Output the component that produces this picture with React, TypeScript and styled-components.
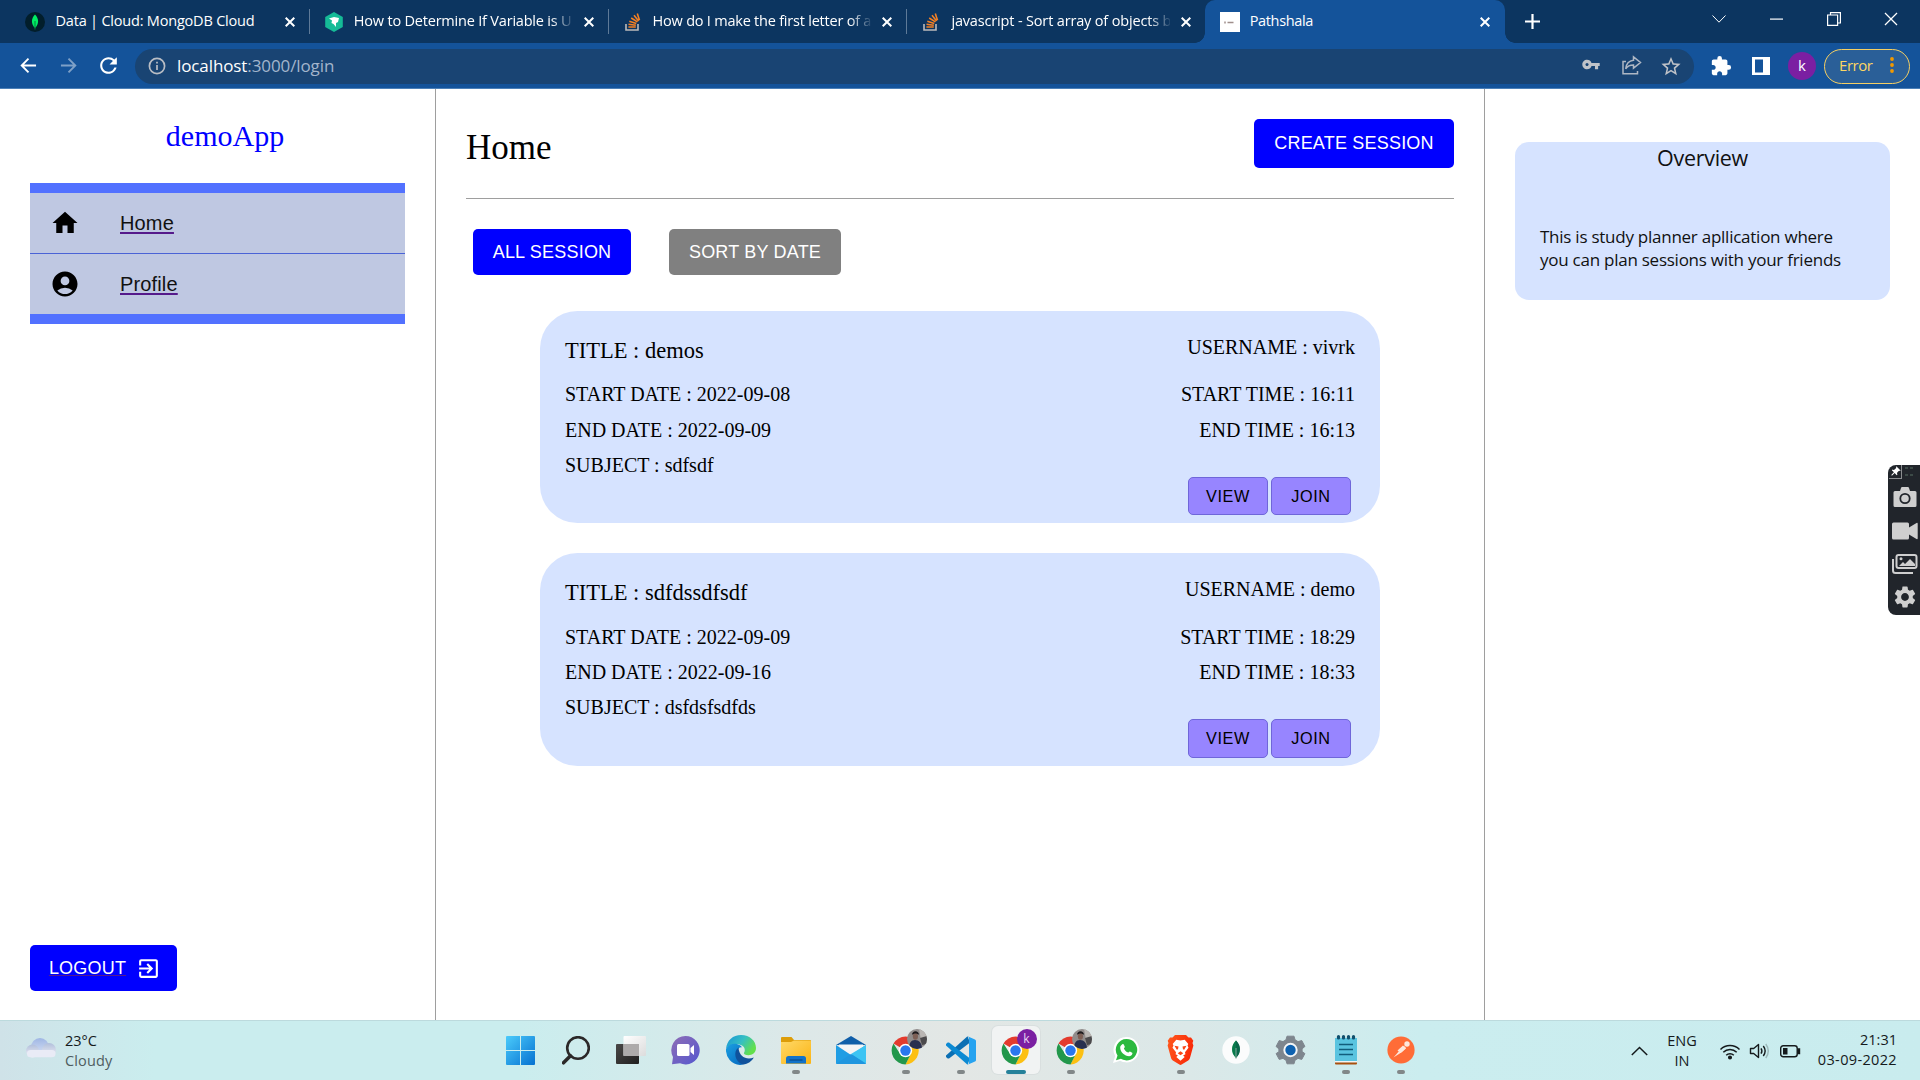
import React from "react";
import styled, { createGlobalStyle, css } from "styled-components";
import { MdHome, MdAccountCircle, MdExitToApp, MdVpnKey, MdStarBorder, MdExtension, MdRefresh, MdSettings, MdPushPin } from "react-icons/md";

const ui = `"Open Sans", "Noto Sans", sans-serif`;
const sans = `"Liberation Sans", Arial, sans-serif`;
const serif = `"Liberation Serif", "Times New Roman", serif`;

const Global = createGlobalStyle`
  *, *::before, *::after { box-sizing: border-box; }
  body { margin: 0; background: #fff; overflow: hidden; }
  button { border: 0; padding: 0; margin: 0; }
  svg { display: block; flex: none; }
`;

const Screen = styled.div`
  position: relative;
  width: 1920px;
  height: 1080px;
  display: grid;
  grid-template-rows: 43px 46px 931px 60px;
  overflow: hidden;
`;

/* ---------- browser tabs ---------- */
const TabStrip = styled.div`
  display: flex;
  align-items: stretch;
  background: #0c3560;
  padding-left: 10px;
  color: #fff;
  font-family: ${ui};
`;
const Tab = styled.div<{ $active?: boolean; $divider?: boolean }>`
  position: relative;
  display: flex;
  align-items: center;
  width: ${(p) => (p.$active ? 300 : 298.8)}px;
  padding: 0 11px 0 15px;
  ${(p) =>
    p.$divider &&
    css`
      &::after {
        content: "";
        position: absolute;
        right: -1px;
        top: 9px;
        width: 1px;
        height: 25px;
        background: #5e7a98;
      }
    `}
  ${(p) =>
    p.$active &&
    css`
      padding-right: 12px;
      background: #14539a;
      border-radius: 10px 10px 0 0;
      &::before,
      &::after {
        content: "";
        position: absolute;
        bottom: 0;
        width: 10px;
        height: 10px;
      }
      &::before {
        left: -10px;
        background: radial-gradient(circle at 0 0, #0c3560 9.5px, #14539a 10px);
      }
      &::after {
        right: -10px;
        background: radial-gradient(circle at 100% 0, #0c3560 9.5px, #14539a 10px);
      }
    `}
`;
const Favicon = styled.span<{ $gap: number }>`
  width: 20px;
  height: 20px;
  margin-right: ${(p) => p.$gap}px;
  display: flex;
  align-items: center;
  justify-content: center;
`;
const TabTitle = styled.span<{ $fade?: boolean; $track: number }>`
  flex: 1;
  min-width: 0;
  white-space: nowrap;
  font-size: 14.5px;
  line-height: 22px;
  padding-bottom: 2px;
  letter-spacing: ${(p) => p.$track}px;
  ${(p) => p.$fade && "mask-image: linear-gradient(90deg, #000 90%, transparent 101%);"}
`;
const CloseTab = styled.span`
  width: 16px;
  margin-left: 8px;
  display: flex;
  justify-content: center;
`;
const NewTab = styled.span`
  width: 54px;
  display: flex;
  align-items: center;
  justify-content: center;
`;
const WindowButtons = styled.div`
  margin-left: auto;
  display: flex;
  height: 37px;
`;
const WindowButton = styled.span`
  width: 57.4px;
  display: flex;
  align-items: center;
  justify-content: center;
`;

/* ---------- browser toolbar ---------- */
const Toolbar = styled.div`
  display: flex;
  align-items: center;
  background: #14539a;
  border-bottom: 1px solid #4c80b8;
  padding: 0 10px 0 8px;
  font-family: ${ui};
`;
const NavButton = styled.span<{ $dim?: boolean }>`
  width: 40px;
  display: flex;
  justify-content: center;
  opacity: ${(p) => (p.$dim ? 0.45 : 1)};
  color: #fff;
`;
const AddressBar = styled.div`
  flex: none;
  display: flex;
  align-items: center;
  width: 1559px;
  height: 35px;
  margin: 1px 0 0 7px;
  padding: 0 10px 0 13px;
  border-radius: 18px;
  background: #194473;
  color: #c0c3c8;
`;
const Url = styled.span`
  margin-left: 11px;
  margin-top: -1px;
  flex: 1;
  font-size: 17px;
  letter-spacing: -0.1px;
  color: #a3b5cc;
  b {
    font-weight: 400;
    color: #fff;
  }
`;
const AddressIcons = styled.span`
  display: flex;
  gap: 14px;
  svg {
    width: 26px;
  }
`;
const ToolIcon = styled.span<{ $w: number }>`
  width: ${(p) => p.$w}px;
  display: flex;
  justify-content: center;
  color: #fff;
`;
const ProfileDot = styled.span`
  width: 28px;
  height: 28px;
  margin: 1px 8px 0 7px;
  border-radius: 50%;
  background: #7b1fa2;
  color: #fff;
  font-size: 15px;
  line-height: 27px;
  text-align: center;
`;
const ErrorChip = styled.span`
  display: flex;
  align-items: center;
  width: 86px;
  height: 35px;
  margin-top: 1px;
  padding: 0 15px 2px 14px;
  justify-content: space-between;
  border: 1.5px solid #f5cf63;
  border-radius: 18px;
  background: #2a5f98;
  color: #fdd663;
  font-size: 15px;
  letter-spacing: -0.45px;
  line-height: 28px;
`;

/* ---------- page ---------- */
const Page = styled.main`
  display: grid;
  grid-template-columns: 436px 1049px 435px;
  background: #fff;
`;
const Sidebar = styled.aside`
  display: flex;
  flex-direction: column;
  align-items: flex-start;
  padding: 30px 30px 29px;
  border-right: 1px solid #9e9e9e;
`;
const Brand = styled.h1`
  margin: 0 0 30px;
  padding-left: 15px;
  width: 375px;
  text-align: center;
  font: 400 30px/34px ${serif};
  color: #0000ff;
`;
const Menu = styled.nav`
  width: 375px;
  border: solid #5271ff;
  border-width: 10px 0;
  background: #bfc8e2;
`;
const MenuItem = styled.div`
  display: flex;
  align-items: center;
  gap: 40px;
  height: 60px;
  padding-left: 20px;
  & + & {
    height: 61px;
    border-top: 1px solid #4a63d6;
  }
`;
const MenuLink = styled.a`
  font: 20px/24px ${sans};
  letter-spacing: 0.15px;
  color: #111;
  text-decoration: underline #551a8b;
  text-decoration-thickness: 2px;
  text-underline-offset: 2px;
`;
const Button = styled.button<{ $tone?: string; $h?: number; $w: number }>`
  display: flex;
  align-items: center;
  justify-content: center;
  width: ${(p) => p.$w}px;
  height: ${(p) => p.$h ?? 46}px;
  border-radius: 5px;
  background: ${(p) => p.$tone ?? "#0000ff"};
  color: #fff;
  font: 18px/22px ${sans};
  letter-spacing: 0.2px;
`;
const CreateButton = styled(Button)`
  padding-bottom: 2px;
`;
const Logout = styled(Button)`
  margin-top: auto;
  gap: 10px;
  padding-left: 3px;
  span {
    text-decoration: underline #551a8b 1px;
    text-underline-offset: 1px;
  }
`;
const Center = styled.section`
  padding: 30px 30px 0;
  border-right: 1px solid #9e9e9e;
`;
const Header = styled.header`
  display: flex;
  justify-content: space-between;
  align-items: flex-start;
  height: 80px;
  border-bottom: 1px solid #9e9e9e;
`;
const Heading = styled.h2`
  margin: 9px 0 0;
  font: 400 35px/40px ${serif};
  color: #000;
`;
const Filters = styled.div`
  display: flex;
  gap: 38px;
  margin: 30px 0 35.9px 7px;
`;
const Cards = styled.div`
  display: flex;
  flex-direction: column;
  gap: 30.2px;
  width: 840px;
  margin-left: 74px;
`;
const Card = styled.article`
  display: flex;
  justify-content: space-between;
  height: 212.3px;
  padding: 0 25px;
  border-radius: 37.5px;
  background: #d6e3ff;
  color: #000;
  font: 20px/35.3px ${serif};
`;
const Facts = styled.div`
  padding-top: 25.1px;
`;
const CardTitle = styled.div`
  font-size: 22.5px;
  line-height: 30px;
  margin-bottom: 11.3px;
`;
const Times = styled.div`
  padding-top: 21.1px;
  text-align: right;
`;
const UserName = styled.div`
  line-height: 30px;
  margin-bottom: 15.3px;
`;
const CardActions = styled.div`
  display: flex;
  justify-content: flex-end;
  gap: 3px;
  margin: 28.8px 4px 0 0;
`;
const SmallButton = styled.button`
  width: 80px;
  height: 38.4px;
  border: 1px solid #6f66d9;
  border-radius: 5px;
  background: #9785ff;
  color: #000;
  font: 16.25px/20px ${sans};
  letter-spacing: 0.58px;
`;
const Right = styled.aside`
  padding: 53px 30px 0;
`;
const Overview = styled.div`
  height: 158px;
  padding: 1px 25px 0;
  border-radius: 14px;
  background: #d6e3ff;
  color: #111;
  font-family: ${ui};
`;
const OverviewTitle = styled.div`
  text-align: center;
  font-size: 21.5px;
  line-height: 30px;
  letter-spacing: -0.3px;
  margin-bottom: 52px;
`;
const OverviewText = styled.p`
  margin: 0;
  font-size: 17px;
  line-height: 23.3px;
  letter-spacing: -0.25px;
  white-space: nowrap;
`;

/* ---------- capture widget ---------- */
const Capture = styled.div`
  position: absolute;
  right: 0;
  top: 465px;
  width: 32px;
  height: 150px;
  padding-left: 1px;
  border-radius: 8px 0 0 8px;
  background: #21252b;
  color: #cfcfcf;
  display: flex;
  flex-direction: column;
  align-items: center;
`;
const PinRow = styled.div`
  width: 100%;
  height: 14px;
  margin-bottom: 2px;
  color: #fff;
  display: flex;
  align-items: center;
  gap: 2px;
`;
const PinBox = styled.span`
  width: 13px;
  height: 14px;
  border: solid #8b8d90;
  border-width: 0 1px 1px 0;
  display: flex;
  align-items: center;
  justify-content: center;
`;
const CaptureSlot = styled.div`
  height: 33px;
  display: flex;
  align-items: center;
`;

/* ---------- taskbar ---------- */
const Taskbar = styled.footer`
  display: grid;
  grid-template-columns: 493px 935px 1fr;
  border-top: 1px solid #bcdadd;
  background: linear-gradient(90deg, #cfe2e8 0, #caedee 8%, #caedee 27%, #dde8e8 42%, #e3e7e5 50%, #dbe8e8 62%, #cbedef 74%, #c9ecee 100%);
  font-family: ${ui};
  color: #151a1c;
`;
const Weather = styled.div`
  display: flex;
  gap: 8px;
  padding: 10px 0 0 25px;
  font-size: 14.5px;
  line-height: 20px;
  letter-spacing: 0;
  em {
    display: block;
    font-style: normal;
    letter-spacing: 0.15px;
    color: #4f5c60;
  }
`;
const Apps = styled.div`
  display: flex;
`;
const AppSlot = styled.div<{ $active?: boolean }>`
  position: relative;
  width: 48px;
  height: 48px;
  margin: 5px 3.5px 0;
  display: flex;
  align-items: center;
  justify-content: center;
  border-radius: 6px;
  ${(p) => p.$active && "background: #f1f3f3; box-shadow: 0 0 0 1px #d9dfdf;"}
`;
const Running = styled.i<{ $wide?: boolean }>`
  position: absolute;
  bottom: 0;
  left: ${(p) => (p.$wide ? 14 : 20)}px;
  width: ${(p) => (p.$wide ? 20 : 8)}px;
  height: 4px;
  border-radius: 2px;
  background: ${(p) => (p.$wide ? "#25819a" : "#818788")};
`;
const Badge = styled.span`
  position: absolute;
  left: 25px;
  top: 3px;
`;
const BadgeLetter = styled.span`
  display: block;
  width: 20px;
  height: 20px;
  border-radius: 50%;
  background: #7b1fa2;
  color: #e9d5f2;
  font-size: 12px;
  line-height: 19px;
  text-align: center;
`;
const Tray = styled.div`
  display: flex;
  align-items: center;
  justify-content: flex-end;
  padding-right: 23px;
  font-size: 14.5px;
  line-height: 20px;
`;
const Lang = styled.div`
  width: 34px;
  margin: 0 20px 0 17px;
  text-align: center;
`;
const Clock = styled.div`
  width: 80px;
  margin-left: 16px;
  text-align: right;
  white-space: nowrap;
  padding-bottom: 1px;
  span {
    letter-spacing: 0.35px;
  }
`;
const TrayIcons = styled.div`
  display: flex;
  gap: 8px;
`;

const X = ({ s = 10, w = 2 }: { s?: number; w?: number }) => (
  <svg width={s} height={s} viewBox="0 0 10 10" stroke="#fff" strokeWidth={w} fill="none">
    <path d="M.7.7l8.6 8.6M9.3.7L.7 9.3" />
  </svg>
);

const Arrow = ({ flip }: { flip?: boolean }) => (
  <svg width="17" height="17" viewBox="0 0 18 18" fill="none" stroke="#fff" strokeWidth="2" transform={flip ? "scale(-1 1)" : undefined}>
    <path d="M17 9H2.5M9 1.8L1.8 9 9 16.2" />
  </svg>
);

const StackIcon = () => (
  <svg width="16" height="18" viewBox="0 0 16 18" fill="none">
    <path d="M1 11v6h12v-6" stroke="#bcbbbb" strokeWidth="1.6" />
    <path d="M3.4 14h7.4M3.5 11.2l7.3 1M4.3 8.2l7 2.3M6.2 5l6.2 3.9M9 2.2l4.6 5.8M12.3.6l2.2 6.6" stroke="#f48024" strokeWidth="1.6" />
  </svg>
);

const Chrome = () => (
  <svg width="29" height="29" viewBox="0 0 48 48">
    <path d="M24 24L4.100 12.500A23 23 0 0 1 43.900 12.500Z" fill="#e33b2e" />
    <path d="M24 13.500h19.400A23 23 0 0 1 24 47L33 29Z" fill="#fcc013" />
    <path d="M4.100 12.500L14.900 29.200 24 34.500 33 29.300 24 47A23 23 0 0 1 4.100 12.500Z" fill="#22974b" />
    <circle cx="24" cy="24" r="11" fill="#fff" />
    <circle cx="24" cy="24" r="8.600" fill="#2a77ee" />
  </svg>
);

const PhotoBadge = () => (
  <Badge>
    <svg width="20" height="20" viewBox="0 0 20 20">
      <defs>
        <clipPath id="face"><circle cx="10" cy="10" r="10" /></clipPath>
      </defs>
      <g clipPath="url(#face)">
        <path d="M0 0h20v20H0z" fill="#918c8b" />
        <path d="M12 0h8v9l-6 2z" fill="#b9b6b3" />
        <path d="M13 9l7-2v8l-5 1z" fill="#4b4a4c" />
        <path d="M2 20c0-6 2-9 6-9s7 3 7 9z" fill="#28304f" />
        <ellipse cx="8.400" cy="7.200" rx="2.600" ry="3.500" fill="#7d5f55" />
        <path d="M5 6c0-5 7-5 7 0-2-2-5-2-7 0z" fill="#1d1a1d" />
      </g>
    </svg>
  </Badge>
);

const StartIcon = () => (
  <svg width="29" height="29" viewBox="0 0 29 29">
    <defs>
      <linearGradient id="win" x2="1" y2="1"><stop stopColor="#4bcbfb" /><stop offset="1" stopColor="#0571d1" /></linearGradient>
    </defs>
    <path d="M1 0h13v14H0V1q0-1 1-1zM15 0h13q1 0 1 1v13H15zM0 15h14v14H1q-1 0-1-1zM15 15h14v13q0 1-1 1H15z" fill="url(#win)" />
  </svg>
);
const SearchIcon = () => (
  <svg width="28" height="29" viewBox="0 0 28 29" fill="none" stroke="#2b2828">
    <circle cx="16" cy="12" r="10.800" strokeWidth="2.600" />
    <path d="M8.500 19.800l-7 7" strokeWidth="3.600" strokeLinecap="round" />
  </svg>
);
const TaskViewIcon = () => (
  <svg width="30" height="28" viewBox="0 0 30 28">
    <defs>
      <linearGradient id="tv" x2="1" y2="1"><stop stopColor="#4a4847" /><stop offset="1" stopColor="#201f1f" /></linearGradient>
      <linearGradient id="tw" x2="1" y2="1"><stop stopColor="#fff" /><stop offset="1" stopColor="#dcdcdc" /></linearGradient>
    </defs>
    <rect y="8" width="23" height="20" rx="1" fill="url(#tv)" />
    <rect x="7.500" y="0" width="22.500" height="20" rx="1" fill="url(#tw)" />
    <path d="M7.500 8H23v12H7.500z" fill="#adaaaa" />
  </svg>
);
const ChatIcon = () => (
  <svg width="29" height="29" viewBox="0 0 29 29">
    <defs>
      <linearGradient id="ch" x2="1" y2="1"><stop stopColor="#8f6db5" /><stop offset="1" stopColor="#5457cf" /></linearGradient>
    </defs>
    <path d="M14.500 0a14.200 14.200 0 1 1-5.500 27.300L1 28.300 2 21A14.200 14.200 0 0 1 14.500 0z" fill="url(#ch)" />
    <rect x="6" y="8" width="12.500" height="12" rx="1.500" fill="#fff" />
    <path d="M19.500 12l3.500-3v10l-3.500-3z" fill="#fff" />
  </svg>
);
const EdgeIcon = () => (
  <svg width="30" height="30" viewBox="0 0 30 30">
    <defs>
      <linearGradient id="e1" x1="0" y1="0" x2="1" y2=".5"><stop stopColor="#1793d8" /><stop offset=".55" stopColor="#35bfc3" /><stop offset="1" stopColor="#62e04c" /></linearGradient>
      <linearGradient id="e2" x1="0" y1="0" x2="1" y2="1"><stop stopColor="#1ba0e2" /><stop offset="1" stopColor="#0462bb" /></linearGradient>
    </defs>
    <path d="M0 14C1 5 7 0 15 0c9 0 15 6 15 13 0 5-4 7.200-7.500 7.200-3 0-5-1-4.500-2.500 1.500-2 1-6-2.500-7.500C10 8 3 9 0 14z" fill="url(#e1)" />
    <path d="M0 14c2-4.500 7-6.200 11.500-4.800 2 .6 4 2 4.500 3-3-.5-5 2-4.500 6 .5 5 5 8.500 10 8-2 2.500-5 3.800-7.500 3.800A15 15 0 0 1 0 14z" fill="url(#e2)" />
    <path d="M12.500 12.500C7 16 8.500 27 17 29.500c5-.5 9-3.500 10.800-7C21 25.500 13 22 12.500 12.500z" fill="#10529c" />
  </svg>
);
const FolderIcon = () => (
  <svg width="30" height="27" viewBox="0 0 30 27">
    <defs>
      <linearGradient id="fo" x2="1" y2="1"><stop stopColor="#ffd968" /><stop offset="1" stopColor="#fbb414" /></linearGradient>
    </defs>
    <path d="M0 1q0-1 1-1h9.500L13 3H29q1 0 1 1v4H0z" fill="#dd9d09" />
    <path d="M0 5h10l3-1.500H29q1 0 1 1V26q0 1-1 1H1q-1 0-1-1z" fill="url(#fo)" />
    <path d="M5 26.500v-5Q5 19 7.500 19h15Q25 19 25 21.500v5z" fill="#1373c9" />
    <path d="M8.500 23h13" stroke="#0c4f93" strokeWidth="1.400" />
  </svg>
);
const MailIcon = () => (
  <svg width="30" height="28" viewBox="0 0 30 28">
    <path d="M0 9L15 0l15 9z" fill="#0f5ea9" />
    <path d="M3 8.500h24V20H3z" fill="#f4f4f5" />
    <path d="M0 9l15 10L30 9v18q0 1-1 1H1q-1 0-1-1z" fill="#1f9de4" />
    <path d="M30 9v18.500L15 18z" fill="#3dc4f3" />
    <path d="M0 28h30L15 18z" fill="#1f96df" />
  </svg>
);
const CodeIcon = () => (
  <svg width="30" height="29" viewBox="0 0 30 29">
    <path d="M21.500.3L0 19.500q-.5.800 0 1.400l1.700 1.500q.6.400 1.300 0L24 6.500z" fill="#0b6fb3" />
    <path d="M21.500 28.700L0 9.500q-.5-.800 0-1.400l1.700-1.500q.6-.400 1.300 0L24 22.500z" fill="#0c8ad3" />
    <path d="M21.500.3L29 3.500q1 .5 1 1.500v19q0 1-1 1.500l-7.500 3.200q1.500-.500 1.500-2V2.500q0-1.500-1.500-2.200z" fill="#26a3f0" />
  </svg>
);
const WhatsIcon = () => (
  <svg width="28" height="28" viewBox="0 0 28 28">
    <path d="M14.500 1a12.700 12.700 0 1 1-6.300 23.700L1 27l2.200-7A12.700 12.700 0 0 1 14.500 1z" fill="#fff" />
    <path d="M14.500 3a10.700 10.700 0 1 1-5.600 19.800L4 24.300l1.500-4.900A10.700 10.700 0 0 1 14.500 3z" fill="#2bb93f" />
    <path d="M10.300 8.200c.5-.5 1.200-.4 1.500.2l1 2.300c.2.500-.9 1.300-.9 1.800.8 1.900 2.300 3.300 4.300 4.100.5 0 1.300-1.300 1.700-1.100l2.300 1.200c.8.600-.5 3.500-3 3.500-4.500 0-9.200-4.600-9-8.800 0-1.300.9-2.100 2.100-3.200z" fill="#fff" />
  </svg>
);
const BraveIcon = () => (
  <svg width="27" height="30" viewBox="0 0 27 30">
    <defs>
      <linearGradient id="br" x2="1" y2=".3"><stop stopColor="#ff5a1e" /><stop offset="1" stopColor="#f92a08" /></linearGradient>
    </defs>
    <path d="M8 0h11l2.500 2.600L24 2.400l2.300 3.300-.8 2.300.9 2.400-3.500 12.800q-.5 1.400-1.700 2.200L14.600 29.600q-1.100.8-2.200 0L5.800 25.400Q4.600 24.600 4.100 23.200L.6 10.400l.9-2.400-.8-2.300L3 2.400l2.500.2z" fill="url(#br)" />
    <path d="M13.500 5.500l4.200-.8 3.600 4.300-.8 1.600 1 2.200-3.500 4.400.4 2-2.300 1.200 1.600 1.600-4.200 3.700-4.200-3.700 1.600-1.600-2.300-1.200.4-2-3.500-4.400 1-2.200L5.700 9l3.600-4.300z" fill="#fff" />
    <path d="M7.500 10.800l4 .8-.5 2.700-1.200.4zM19.500 10.800l-4 .8.500 2.700 1.200.4zM13.500 16.200l2.800 2-2.800 2-2.800-2z" fill="#fb4617" />
  </svg>
);
const MongoIcon = () => (
  <svg width="28" height="28" viewBox="0 0 28 28">
    <circle cx="14" cy="14" r="13.700" fill="#fbfcfc" />
    <path d="M14 4.500c5 5 5.500 12 0 17.500z" fill="#116149" />
    <path d="M14 4.500c-5 5-5.500 12 0 17.500z" fill="#13aa52" />
    <path d="M14 4.500c-5 5-5.500 12 0 17.500 5.500-5.500 5-12.500 0-17.500z" fill="#07684a" opacity=".75" />
    <path d="M14 12v11" stroke="#9fb9ae" strokeWidth=".8" />
  </svg>
);
const GearIcon = () => (
  <svg width="31" height="30" viewBox="0 0 30 30">
    <path d="M11.500 1.200l-1 3.600-3 1.800-3.800-1L.6 11.500l2.800 2.400v2.800L.6 18.600l3.100 5.800 3.800-1 3 1.800 1 3.600h7l1-3.600 3-1.800 3.800 1 3.100-5.800-2.800-2v-2.800l2.800-2.300-3.100-5.900-3.800 1-3-1.800-1-3.600z" fill="#7e868e" stroke="#7e868e" strokeLinejoin="round" />
    <circle cx="15" cy="15" r="7.200" fill="#f3f5f6" />
    <circle cx="15" cy="15" r="5.200" fill="#0f62b0" />
  </svg>
);
const NotepadIcon = () => (
  <svg width="24" height="30" viewBox="0 0 24 30">
    <path d="M1 3h22v24H1z" fill="#5ac4e0" />
    <path d="M1 26h22v1.500H1z" fill="#f3f3f3" />
    <path d="M1 27.500h22v1q0 1-1 1H2q-1 0-1-1z" fill="#a8500e" />
    <path d="M5 9.500h14M5 14.500h14M5 19.500h14" stroke="#125d7c" strokeWidth="1.700" />
    <path d="M4.500 1.600v1.400M9.500 1.600v1.400M14.500 1.600v1.400M19.500 1.600v1.400" stroke="#11506d" strokeWidth="3.200" strokeLinecap="round" />
  </svg>
);
const PostmanIcon = () => (
  <svg width="28" height="28" viewBox="0 0 28 28">
    <circle cx="14" cy="14" r="13.600" fill="#ff6c37" />
    <path d="M6.500 21.500l6.500-7.500 4-4 2 2-4 4z" fill="#fde7dc" />
    <path d="M10.500 14.500l5.500-5 3 3-5.500 4.500z" fill="#fde7dc" />
    <circle cx="20" cy="8" r="2.700" fill="#fde7dc" />
  </svg>
);
const CloudIcon = () => (
  <svg width="32" height="32" viewBox="0 -6 32 32">
    <defs>
      <linearGradient id="c1" x2="0" y2="1"><stop stopColor="#9fb6e4" /><stop offset="1" stopColor="#dbe3f5" /></linearGradient>
      <linearGradient id="c2" x2="0" y2="1"><stop stopColor="#b1bfdb" /><stop offset="1" stopColor="#f2f1f8" /></linearGradient>
    </defs>
    <circle cx="15" cy="10" r="9" fill="url(#c1)" />
    <circle cx="7.500" cy="14" r="6.500" fill="url(#c2)" />
    <circle cx="24" cy="13" r="7" fill="url(#c2)" />
    <rect x="2" y="13" width="28.500" height="7.300" rx="3.600" fill="#e9ebf6" />
  </svg>
);

const tabs = [
  {
    title: "Data | Cloud: MongoDB Cloud",
    gap: 10.5,
    track: -0.2,
    icon: (
      <svg width="20" height="20" viewBox="0 0 20 20">
        <circle cx="10" cy="10" r="10" fill="#021e2b" />
        <path d="M10 2.500c4 4 4.200 9.500 0 13.500-4.200-4-4-9.500 0-13.500z" fill="#00ed64" />
        <path d="M10 9v8.500" stroke="#01823e" strokeWidth="1" />
      </svg>
    ),
  },
  {
    title: "How to Determine If Variable is U",
    gap: 10,
    track: -0.2,
    icon: (
      <svg width="20" height="20" viewBox="0 0 20 20">
        <path d="M10 0l8.800 5v10L10 20l-8.800-5V5z" fill="#15bb97" />
        <path d="M5 6.500l5-1.500 5 1-1 4-2 1v4l-2.500-3-2-1 .5-2.500z" fill="#fff" />
      </svg>
    ),
  },
  { title: "How do I make the first letter of a", gap: 10, track: -0.22, icon: <StackIcon /> },
  { title: "javascript - Sort array of objects b", gap: 10, track: -0.16, icon: <StackIcon /> },
];

const sessions = [
  { title: "demos", user: "vivrk", startDate: "2022-09-08", endDate: "2022-09-09", subject: "sdfsdf", start: "16:11", end: "16:13" },
  { title: "sdfdssdfsdf", user: "demo", startDate: "2022-09-09", endDate: "2022-09-16", subject: "dsfdsfsdfds", start: "18:29", end: "18:33" },
];

const apps: { icon: React.ReactNode; running?: boolean; active?: boolean; badge?: React.ReactNode }[] = [
  { icon: <StartIcon /> },
  { icon: <SearchIcon /> },
  { icon: <TaskViewIcon /> },
  { icon: <ChatIcon /> },
  { icon: <EdgeIcon /> },
  { icon: <FolderIcon />, running: true },
  { icon: <MailIcon /> },
  { icon: <Chrome />, running: true, badge: <PhotoBadge /> },
  { icon: <CodeIcon />, running: true },
  { icon: <Chrome />, running: true, active: true, badge: <Badge><BadgeLetter>k</BadgeLetter></Badge> },
  { icon: <Chrome />, running: true, badge: <PhotoBadge /> },
  { icon: <WhatsIcon /> },
  { icon: <BraveIcon />, running: true },
  { icon: <MongoIcon /> },
  { icon: <GearIcon /> },
  { icon: <NotepadIcon />, running: true },
  { icon: <PostmanIcon />, running: true },
];

export default function App() {
  return (
    <Screen>
      <Global />
      <TabStrip>
        {tabs.map((t, i) => (
          <Tab key={t.title} $divider={i < 3}>
            <Favicon $gap={t.gap}>{t.icon}</Favicon>
            <TabTitle $fade={i > 0} $track={t.track}>{t.title}</TabTitle>
            <CloseTab><X /></CloseTab>
          </Tab>
        ))}
        <Tab $active>
          <Favicon $gap={9.5}>
            <svg width="20" height="20" viewBox="0 0 20 20">
              <path d="M0 0h20v20H0z" fill="#fff" />
              <path d="M5 9.500v2M7.500 10.500h6" stroke="#a08f8c" strokeWidth="1.500" />
            </svg>
          </Favicon>
          <TabTitle $track={-0.35}>Pathshala</TabTitle>
          <CloseTab><X /></CloseTab>
        </Tab>
        <NewTab>
          <svg width="15" height="15" viewBox="0 0 15 15" stroke="#fff" strokeWidth="2.200"><path d="M7.500 0v15M0 7.500h15" /></svg>
        </NewTab>
        <WindowButtons>
          <WindowButton>
            <svg width="14" height="8" viewBox="0 0 14 8" fill="none" stroke="#fff"><path d="M.5.5L7 7.200 13.500.5" /></svg>
          </WindowButton>
          <WindowButton>
            <svg width="13" height="2" viewBox="0 0 13 2"><path d="M0 .5h13v1.200H0z" fill="#fff" /></svg>
          </WindowButton>
          <WindowButton>
            <svg width="14" height="14" viewBox="0 0 14 14" fill="none" stroke="#fff" strokeWidth="1.200"><path d="M.6 3h10v10.400H.6zM3.500 3V.6h9.900v10.400h-2.600" /></svg>
          </WindowButton>
          <WindowButton><X s={14} w={0.9} /></WindowButton>
        </WindowButtons>
      </TabStrip>

      <Toolbar>
        <NavButton><Arrow /></NavButton>
        <NavButton $dim><Arrow flip /></NavButton>
        <NavButton><MdRefresh size={25} /></NavButton>
        <AddressBar>
          <svg width="18" height="18" viewBox="0 0 18 18" fill="none" stroke="#b9bdc4" strokeWidth="1.700">
            <circle cx="9" cy="9" r="7.600" />
            <path d="M9 8v5M9 4.800v1.800" />
          </svg>
          <Url><b>localhost</b>:3000/login</Url>
          <AddressIcons>
            <MdVpnKey size={19} />
            <svg width="26" height="20" viewBox="0 0 26 20" fill="none" stroke="#aeb7c4" strokeWidth="1.500">
              <path d="M8 6.500H5v12.300h14.500V16" />
              <path d="M15.500 1.800l7 5.700-7 5.700V10c-3.500 0-6 1-7.800 3.800.5-5 3.500-8 7.800-8.500z" />
            </svg>
            <MdStarBorder size={23} />
          </AddressIcons>
        </AddressBar>
        <ToolIcon $w={54}><MdExtension size={22} /></ToolIcon>
        <ToolIcon $w={26}>
          <svg width="18" height="18" viewBox="0 0 18 18"><path d="M0 0h18v18H0zM3 2.500v13h8v-13z" fill="#fff" fillRule="evenodd" /></svg>
        </ToolIcon>
        <ToolIcon $w={7} />
        <ProfileDot>k</ProfileDot>
        <ErrorChip>
          Error
          <svg width="4" height="16" viewBox="0 0 4 16" fill="#f29900"><circle cx="2" cy="2" r="1.900" /><circle cx="2" cy="8" r="1.900" /><circle cx="2" cy="14" r="1.900" /></svg>
        </ErrorChip>
      </Toolbar>

      <Page>
        <Sidebar>
          <Brand>demoApp</Brand>
          <Menu>
            <MenuItem><MdHome size={30} /><MenuLink>Home</MenuLink></MenuItem>
            <MenuItem><MdAccountCircle size={30} /><MenuLink>Profile</MenuLink></MenuItem>
          </Menu>
          <Logout $w={147}><span>LOGOUT</span><MdExitToApp size={25} /></Logout>
        </Sidebar>
        <Center>
          <Header>
            <Heading>Home</Heading>
            <CreateButton $w={200} $h={49}>CREATE SESSION</CreateButton>
          </Header>
          <Filters>
            <Button $w={158}>ALL SESSION</Button>
            <Button $w={172} $tone="#808080">SORT BY DATE</Button>
          </Filters>
          <Cards>
            {sessions.map((s) => (
              <Card key={s.title}>
                <Facts>
                  <CardTitle>TITLE : {s.title}</CardTitle>
                  <div>START DATE : {s.startDate}</div>
                  <div>END DATE : {s.endDate}</div>
                  <div>SUBJECT : {s.subject}</div>
                </Facts>
                <Times>
                  <UserName>USERNAME : {s.user}</UserName>
                  <div>START TIME : {s.start}</div>
                  <div>END TIME : {s.end}</div>
                  <CardActions>
                    <SmallButton>VIEW</SmallButton>
                    <SmallButton>JOIN</SmallButton>
                  </CardActions>
                </Times>
              </Card>
            ))}
          </Cards>
        </Center>
        <Right>
          <Overview>
            <OverviewTitle>Overview</OverviewTitle>
            <OverviewText>
              This is study planner apllication where
              <br />
              you can plan sessions with your friends
            </OverviewText>
          </Overview>
        </Right>
      </Page>

      <Taskbar>
        <Weather>
          <CloudIcon />
          <div>23°C<em>Cloudy</em></div>
        </Weather>
        <Apps>
          {apps.map((a, i) => (
            <AppSlot key={i} $active={a.active}>
              {a.icon}
              {a.badge}
              {a.running && <Running $wide={a.active} />}
            </AppSlot>
          ))}
        </Apps>
        <Tray>
          <svg width="17" height="10" viewBox="0 0 17 10" fill="none" stroke="#151a1c" strokeWidth="1.500"><path d="M.8 9l7.700-7.500L16.200 9" /></svg>
          <Lang>ENG<br />IN</Lang>
          <TrayIcons>
            <svg width="22" height="18" viewBox="0 0 22 18" fill="none" stroke="#151a1c" strokeWidth="1.500">
              <path d="M1.500 7.500a13.500 13.500 0 0 1 19 0M4.300 10.300a9.500 9.500 0 0 1 13.400 0M7.200 13.200a5.400 5.400 0 0 1 7.600 0" />
              <circle cx="11" cy="15.500" r="1.300" fill="#151a1c" />
            </svg>
            <svg width="22" height="18" viewBox="0 0 22 18" fill="none" stroke="#151a1c" strokeWidth="1.400">
              <path d="M1.500 6.500h3.200L9.500 2.500v13l-4.800-4H1.500z" strokeLinejoin="round" />
              <path d="M12 6.300q1.800 2.700 0 5.400M14.300 4q3.700 5 0 10" />
              <path d="M16.800 2q5 7 0 14" opacity=".25" />
            </svg>
            <svg width="22" height="18" viewBox="0 0 22 18" fill="none" stroke="#151a1c" strokeWidth="1.400">
              <rect x="1.700" y="3.700" width="16.500" height="11" rx="2.500" />
              <path d="M4 6h4.500v6.500H4z" fill="#151a1c" stroke="none" />
              <path d="M19 7h1.500v4.500H19z" fill="#151a1c" />
            </svg>
          </TrayIcons>
          <Clock>21:31<br /><span>03-09-2022</span></Clock>
        </Tray>
      </Taskbar>

      <Capture>
        <PinRow>
          <PinBox><svg width="12" height="12" viewBox="0 0 24 24"><g transform="rotate(45 12 12)"><MdPushPin size={24} /></g></svg></PinBox>
          <svg width="10" height="12" viewBox="0 0 10 12" fill="#3c4a47"><path d="M1 1h3v2H1zM6 1h3v2H6zM1 8h3v2H1zM6 8h3v2H6z" /></svg>
        </PinRow>
        <CaptureSlot>
          <svg width="24" height="21" viewBox="0 0 24 21"><path d="M2 4h5l1-3q.3-1 1-1h6q.700 0 1 1l1 3h5q1.500 0 1.500 1.500v13q0 1.500-1.500 1.500H2Q.5 20 .5 18.500v-13Q.5 4 2 4z" fill="#cfcfcf" /><circle cx="12" cy="11.500" r="4.700" fill="none" stroke="#21252b" strokeWidth="1.800" /></svg>
        </CaptureSlot>
        <CaptureSlot>
          <svg width="26" height="18" viewBox="0 0 26 18"><path d="M1.500.5h14q1.500 0 1.500 1.500v3.500L24.500 1q1.200-.5 1.200.8v14.400q0 1.300-1.200.8L17 12.500V16q0 1.500-1.500 1.500h-14Q0 17.500 0 16V2Q0 .5 1.500.5z" fill="#cfcfcf" /></svg>
        </CaptureSlot>
        <CaptureSlot>
          <svg width="26" height="20" viewBox="0 0 26 20" fill="none" stroke="#cfcfcf" strokeWidth="2"><rect x="4.500" y="1" width="20" height="13" rx="2" /><path d="M1 5v11.500q0 2.500 2.500 2.500H21" /><circle cx="9" cy="4.800" r="1.500" fill="#cfcfcf" stroke="none" /><path d="M7 12l4-4 2 2 5-5 5 5v2z" fill="#cfcfcf" stroke="none" /></svg>
        </CaptureSlot>
        <CaptureSlot><MdSettings size={26} /></CaptureSlot>
      </Capture>
    </Screen>
  );
}
